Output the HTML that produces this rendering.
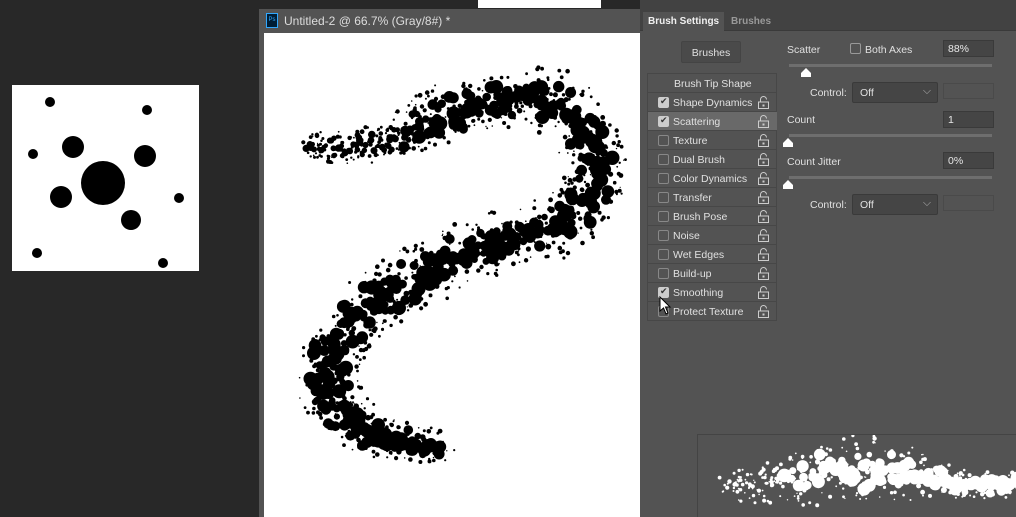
<!DOCTYPE html><html><head><style>
*{margin:0;padding:0;box-sizing:border-box}
html,body{width:1016px;height:517px;overflow:hidden}
body{background:#282828;position:relative;font-family:"Liberation Sans",sans-serif;font-size:10.5px;color:#e0e0e0}
.a{position:absolute;white-space:nowrap}
.row{position:absolute;left:0;width:129px;height:19px;border-bottom:1px solid #474747}
.row .cb{position:absolute;left:10px;top:4px;width:11px;height:11px;border:1px solid #888;border-radius:2px}
.row .cb.on{background:#ccc;border-color:#ccc}
.row .cb.on:after{content:"✔";position:absolute;left:1px;top:-2px;font-size:9px;color:#333}
.row .t{position:absolute;left:25px;top:4px;white-space:nowrap}
.lk{position:absolute;left:110px;top:3px;width:11px;height:13px}
.inp{position:absolute;background:#454545;border:1px solid #3a3a3a;height:17px;padding:2px 4px;color:#e8e8e8}
.trk{position:absolute;left:789px;width:203px;height:3px;background:#6e6e6e}
.dd{position:absolute;left:852px;width:86px;height:21px;background:#454545;border:1px solid #3a3a3a;border-radius:2px;padding:4px 7px}
</style></head><body>
<div class="a" style="left:478px;top:0;width:123px;height:8px;background:#fff"></div>
<div class="a" style="left:12px;top:85px;width:187px;height:186px;background:#fff">
<svg width="187" height="186" viewBox="12 85 187 186"><g fill="#000">
<circle cx="103" cy="183" r="22"/><circle cx="73" cy="147" r="11"/><circle cx="145" cy="156" r="11"/><circle cx="61" cy="197" r="11"/><circle cx="131" cy="220" r="10"/>
<circle cx="50" cy="102" r="5"/><circle cx="147" cy="110" r="5"/><circle cx="33" cy="154" r="5"/><circle cx="179" cy="198" r="5"/><circle cx="37" cy="253" r="5"/><circle cx="163" cy="263" r="5"/></g></svg></div>
<div class="a" style="left:259px;top:9px;width:381px;height:508px;background:#535353"></div>
<div class="a" style="left:266px;top:13px;width:12px;height:15px;border:1px solid #31a8ff;background:#001e36;color:#31a8ff;font-size:6px;line-height:13px;text-align:center">Ps</div>
<div class="a" style="left:284px;top:14px;font-size:12px;color:#ddd">Untitled-2 @ 66.7% (Gray/8#) *</div>
<div class="a" style="left:264px;top:33px;width:376px;height:484px;background:#fff;overflow:hidden">
<svg id="st" width="376" height="484" viewBox="264 33 376 484"></svg></div>
<div class="a" style="left:640px;top:0;width:376px;height:517px;background:#535353"></div>
<div class="a" style="left:640px;top:0;width:376px;height:12px;background:#424242"></div>
<div class="a" style="left:640px;top:12px;width:376px;height:19px;background:#424242;border-bottom:1px solid #3a3a3a"></div>
<div class="a" style="left:643px;top:12px;width:81px;height:20px;background:#535353;font-weight:bold;padding:4px 5px;color:#f0f0f0;font-size:10px">Brush Settings</div>
<div class="a" style="left:725px;top:12px;width:50px;height:19px;padding:4px 6px;color:#999;font-weight:bold;font-size:10px">Brushes</div>
<div class="a" style="left:681px;top:41px;width:60px;height:22px;border:1px solid #444;background:#4a4a4a;border-radius:2px;text-align:center;padding-top:5px">Brushes</div>
<div class="a" style="left:647px;top:73px;width:130px;height:248px;border:1px solid #474747">
<div class="row" style="top:0"><span class="t" style="left:26px">Brush Tip Shape</span></div>
<div id="rows"></div></div>
<div class="a" style="left:787px;top:44px">Scatter</div>
<div class="a" style="left:850px;top:43px;width:11px;height:11px;border:1px solid #999;border-radius:2px"></div>
<div class="a" style="left:865px;top:44px">Both Axes</div>
<div class="inp" style="left:943px;top:40px;width:51px">88%</div>
<div class="trk" style="top:64px"></div>
<svg class="a" style="left:800px;top:67px" width="12" height="11"><path d="M1 10 V6 L6 1 L11 6 V10 Z" fill="#fff"/></svg>
<div class="a" style="left:810px;top:87px">Control:</div>
<div class="dd" style="top:82px">Off<span style="position:absolute;right:6px;top:2px;color:#aaa">⌵</span></div>
<div class="a" style="left:943px;top:83px;width:51px;height:16px;border:1px solid #4a4a4a"></div>
<div class="a" style="left:787px;top:114px">Count</div>
<div class="inp" style="left:943px;top:111px;width:51px">1</div>
<div class="trk" style="top:134px"></div>
<svg class="a" style="left:782px;top:137px" width="12" height="11"><path d="M1 10 V6 L6 1 L11 6 V10 Z" fill="#fff"/></svg>
<div class="a" style="left:787px;top:156px">Count Jitter</div>
<div class="inp" style="left:943px;top:152px;width:51px">0%</div>
<div class="trk" style="top:176px"></div>
<svg class="a" style="left:782px;top:179px" width="12" height="11"><path d="M1 10 V6 L6 1 L11 6 V10 Z" fill="#fff"/></svg>
<div class="a" style="left:810px;top:199px">Control:</div>
<div class="dd" style="top:194px">Off<span style="position:absolute;right:6px;top:2px;color:#aaa">⌵</span></div>
<div class="a" style="left:943px;top:195px;width:51px;height:16px;border:1px solid #4a4a4a"></div>
<div class="a" style="left:697px;top:434px;width:319px;height:83px;border:1px solid #444;border-right:0;border-bottom:0;overflow:hidden">
<svg id="pv" width="319" height="83" viewBox="697 434 319 83"></svg></div>
<svg class="a" style="left:659px;top:296px" width="14" height="20"><path d="M1 1 V15 L4.5 12 L7 18 L9 17 L6.5 11 H11 Z" fill="#fff" stroke="#000" stroke-width="1"/></svg>
<script>
var names=[["Shape Dynamics",1],["Scattering",1],["Texture",0],["Dual Brush",0],["Color Dynamics",0],["Transfer",0],["Brush Pose",0],["Noise",0],["Wet Edges",0],["Build-up",0],["Smoothing",1],["Protect Texture",0]];
var h="";names.forEach(function(n,i){var bg=i==1?"background:#696969;":"";
h+='<div class="row" style="top:'+(19*(i+1))+'px;'+bg+'"><div class="cb'+(n[1]?' on':'')+'"></div><span class="t">'+n[0]+'</span><svg class="lk" viewBox="0 0 11 13"><path d="M2.5 6 V3.5 a3 3 0 0 1 6 0" fill="none" stroke="#ccc"/><rect x="0.5" y="6" width="10" height="6.5" fill="none" stroke="#ccc"/><rect x="4.5" y="8.5" width="2" height="2" fill="#ccc"/></svg></div>';});
document.getElementById("rows").innerHTML=h;
var s=1234567;function r(){s=(s*16807)%2147483647;return s/2147483647;}
var pts=[[305,145],[345,148],[390,138],[440,118],[490,100],[540,95],[575,112],[595,150],[592,195],[565,225],[515,238],[460,255],[410,280],[365,310],[335,345],[325,385],[345,420],[385,440],[440,448]];
function seg(P,st,fn){for(var i=0;i<P.length-1;i++){var a=P[i],b=P[i+1],d=Math.hypot(b[0]-a[0],b[1]-a[1]);for(var t=0;t<d;t+=st)fn(a[0]+(b[0]-a[0])*t/d,a[1]+(b[1]-a[1])*t/d,(i+t/d)/(P.length-1));}}
var c="";seg(pts,1.2,function(x,y,f){var w=f<0.15?12+f*100:(f>0.85?34-(f-0.85)*100:34);for(var k=0;k<2;k++){var ang=r()*6.283,rr=Math.pow(r(),0.85)*w;var core=rr<w*0.6&&r()<0.8;var rad=core?(f<0.12?1.3+r()*2.5:1.8+r()*5.5):0.6+r()*1.8;c+='<circle cx="'+(x+Math.cos(ang)*rr).toFixed(1)+'" cy="'+(y+Math.sin(ang)*rr).toFixed(1)+'" r="'+rad.toFixed(1)+'"/>';}});
document.getElementById("st").innerHTML='<g fill="#000">'+c+'</g>';
var p=[[730,485],[790,478],[850,468],[910,475],[970,485],[1020,483]];c="";
seg(p,1.3,function(x,y,f){var w=8+22*Math.sin(Math.min(f*1.3,1)*3.14)+6;for(var k=0;k<2;k++){var ang=r()*6.283,rr=Math.pow(r(),0.85)*w;var rad=rr<w*0.6&&f>0.2&&r()<0.8?1.8+r()*5:0.6+r()*1.6;c+='<circle cx="'+(x+Math.cos(ang)*rr*1.2).toFixed(1)+'" cy="'+(y+Math.sin(ang)*rr).toFixed(1)+'" r="'+rad.toFixed(1)+'"/>';}});
document.getElementById("pv").innerHTML='<g fill="#fff">'+c+'</g>';
</script>
</body></html>
